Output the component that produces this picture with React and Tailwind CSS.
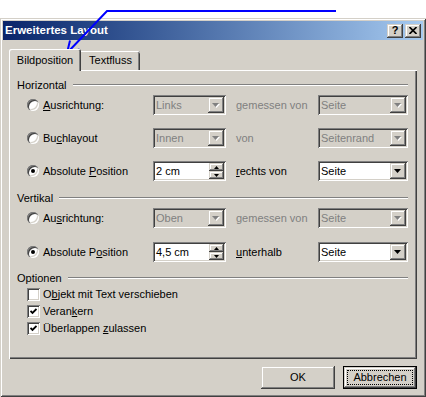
const face = 'bg-[#d4d0c8]'
const sunken = 'shadow-[inset_1px_1px_#808080,inset_-1px_-1px_#ffffff,inset_2px_2px_#404040,inset_-2px_-2px_#d4d0c8]'
const raised = 'shadow-[inset_-1px_-1px_#404040,inset_1px_1px_#d4d0c8,inset_-2px_-2px_#808080,inset_2px_2px_#ffffff]'

const DownArrow = ({ disabled }) => (
  <svg width="8" height="5" viewBox="0 0 8 5">
    {disabled && <polygon points="1,1 8,1 4.5,5" fill="#ffffff" />}
    <polygon points="0,0 7,0 3.5,4" fill={disabled ? '#808080' : '#000000'} />
  </svg>
)

const Dropdown = ({ value, disabled, width }) => (
  <div
    className={`flex h-[20px] items-center p-[2px] ${sunken} ${width} ${
      disabled ? 'bg-[#d4d0c8] text-[#808080]' : 'bg-white text-black'
    }`}
  >
    <span className="flex-1 pl-[1px] leading-[16px]">{value}</span>
    <span className={`flex h-[16px] w-[16px] items-center justify-center ${face} ${raised}`}>
      <DownArrow disabled={disabled} />
    </span>
  </div>
)

const SpinEdit = ({ value }) => (
  <div className={`flex h-[20px] w-[73px] bg-white p-[2px] ${sunken}`}>
    <span className="flex-1 pl-[1px] leading-[16px]">{value}</span>
    <div className="flex w-[15px] flex-col">
      <span className={`flex h-[8px] items-center justify-center ${face} ${raised}`}>
        <svg width="5" height="3" viewBox="0 0 5 3">
          <polygon points="2.5,0 5,3 0,3" fill="#000" />
        </svg>
      </span>
      <span className={`flex h-[8px] items-center justify-center ${face} ${raised}`}>
        <svg width="5" height="3" viewBox="0 0 5 3">
          <polygon points="0,0 5,0 2.5,3" fill="#000" />
        </svg>
      </span>
    </div>
  </div>
)

const Radio = ({ checked }) => (
  <span className="flex h-[12px] w-[12px] shrink-0 items-center justify-center rounded-full bg-white shadow-[inset_1px_1px_#808080,inset_2px_2px_#404040,inset_-1px_-1px_#ffffff,inset_-2px_-2px_#d4d0c8]">
    {checked && <span className="h-[4px] w-[4px] rounded-full bg-black" />}
  </span>
)

const Checkbox = ({ checked }) => (
  <span className={`flex h-[13px] w-[13px] shrink-0 items-center justify-center bg-white ${sunken}`}>
    {checked && (
      <svg width="7" height="7" viewBox="0 0 7 7">
        <path d="M0.5 3 L2.5 5 L6.5 1" stroke="#000" strokeWidth="1.8" fill="none" />
      </svg>
    )}
  </span>
)

const GroupHeader = ({ label, className }) => (
  <div className={`flex h-[14px] items-center gap-[6px] pl-[8px] pr-[9px] ${className}`}>
    <span>{label}</span>
    <span className="h-[2px] flex-1 border-t border-b border-t-[#808080] border-b-white" />
  </div>
)

const OptionRow = ({ className, checked, label, control, label2, muted, control2 }) => (
  <div className={`flex h-[20px] items-center pl-[18px] ${className}`}>
    <div className="flex w-[126px] items-center gap-[4px]">
      <Radio checked={checked} />
      <span>{label}</span>
    </div>
    {control}
    <span className={`ml-[10px] w-[82px] ${muted ? 'text-[#808080]' : ''}`}>{label2}</span>
    {control2}
  </div>
)

const CheckRow = ({ checked, children }) => (
  <div className="flex h-[17px] items-center gap-[3px] pl-[18px]">
    <Checkbox checked={checked} />
    <span>{children}</span>
  </div>
)

const App = () => {
  return (
    <div className="relative h-[397px] w-[426px] overflow-hidden bg-white font-['Liberation_Sans',Arial,sans-serif] text-[11px] text-black">
      <div className="mt-[18px] flex h-[379px] w-[426px] flex-col bg-[#d4d0c8] p-[3px] shadow-[inset_1px_1px_#d4d0c8,inset_-1px_-1px_#404040,inset_2px_2px_#ffffff,inset_-2px_-2px_#808080]">
        <div className="flex h-[19px] items-center justify-between bg-linear-to-r from-[#0a246a] to-[#a6caf0] pl-[2px] pr-[2px]">
          <span className="text-[11.5px] font-bold text-white">Erweitertes Layout</span>
          <div className="flex gap-[2px]">
            <span className={`flex h-[14px] w-[16px] items-center justify-center text-[11px] font-bold leading-none ${face} ${raised}`}>
              ?
            </span>
            <span className={`flex h-[14px] w-[16px] items-center justify-center ${face} ${raised}`}>
              <svg width="8" height="7" viewBox="0 0 8 7">
                <path d="M0.5 0 L7.5 7 M7.5 0 L0.5 7" stroke="#000" strokeWidth="1.6" />
              </svg>
            </span>
          </div>
        </div>

        <div className="flex flex-col px-[6px] pt-[9px]">
          <div className="flex h-[21px] items-start">
            <div className={`relative z-10 flex h-[22px] w-[72px] items-center justify-center rounded-t-[2px] ${face} shadow-[inset_1px_1px_#ffffff,inset_-1px_0_#404040,inset_-2px_0_#808080]`}>
              Bildposition
            </div>
            <div className={`mt-[2px] flex h-[19px] w-[59px] items-center justify-center rounded-tr-[2px] ${face} shadow-[inset_0_1px_#ffffff,inset_-1px_0_#404040,inset_-2px_0_#808080]`}>
              Textfluss
            </div>
          </div>

          <div className={`flex h-[289px] flex-col ${face} shadow-[inset_1px_1px_#ffffff,inset_-1px_-1px_#404040,inset_-2px_-2px_#808080]`}>
            <GroupHeader label="Horizontal" className="mt-[8px]" />
            <OptionRow
              className="mt-[3px]"
              label={<><u>A</u>usrichtung:</>}
              control={<Dropdown value="Links" disabled width="w-[73px]" />}
              label2="gemessen von"
              muted
              control2={<Dropdown value="Seite" disabled width="w-[90px]" />}
            />
            <OptionRow
              className="mt-[13px]"
              label={<>Bu<u>c</u>hlayout</>}
              control={<Dropdown value="Innen" disabled width="w-[73px]" />}
              label2="von"
              muted
              control2={<Dropdown value="Seitenrand" disabled width="w-[90px]" />}
            />
            <OptionRow
              className="mt-[13px]"
              checked
              label={<>Absolute <u>P</u>osition</>}
              control={<SpinEdit value="2 cm" />}
              label2={<><u>r</u>echts von</>}
              control2={<Dropdown value="Seite" width="w-[90px]" />}
            />

            <GroupHeader label="Vertikal" className="mt-[10px]" />
            <OptionRow
              className="mt-[3px]"
              label={<>Au<u>s</u>richtung:</>}
              control={<Dropdown value="Oben" disabled width="w-[73px]" />}
              label2="gemessen von"
              muted
              control2={<Dropdown value="Seite" disabled width="w-[90px]" />}
            />
            <OptionRow
              className="mt-[14px]"
              checked
              label={<>Absolute P<u>o</u>sition</>}
              control={<SpinEdit value="4,5 cm" />}
              label2={<><u>u</u>nterhalb</>}
              control2={<Dropdown value="Seite" width="w-[90px]" />}
            />

            <GroupHeader label="Optionen" className="mt-[9px]" />
            <div className="mt-[1px] flex flex-col">
              <CheckRow>
                O<u>b</u>jekt mit Text verschieben
              </CheckRow>
              <CheckRow checked>
                Veran<u>k</u>ern
              </CheckRow>
              <CheckRow checked>
                Überlappen <u>z</u>ulassen
              </CheckRow>
            </div>
          </div>

          <div className="mt-[7px] flex justify-end gap-[8px]">
            <button type="button" className={`flex h-[23px] w-[74px] items-center justify-center ${face} ${raised}`}>
              OK
            </button>
            <button type="button" className={`flex h-[23px] w-[74px] border border-black ${face}`}>
              <span className={`flex flex-1 p-[3px] ${raised}`}>
                <span className="flex flex-1 items-center justify-center border border-dotted border-black">
                  Abbrechen
                </span>
              </span>
            </button>
          </div>
        </div>
      </div>

      <svg className="pointer-events-none absolute left-0 top-0" width="426" height="60" viewBox="0 0 426 60">
        <path
          d="M336 11 L107 11 L67 53 M79.5 49.5 L67 53 L70 40.5"
          stroke="#0000ff"
          strokeWidth="2"
          fill="none"
        />
      </svg>
    </div>
  )
}

export default App
